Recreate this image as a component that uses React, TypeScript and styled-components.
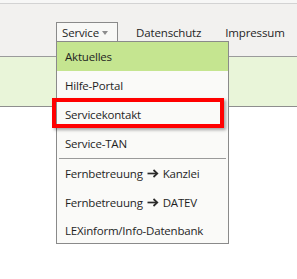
import React from 'react';
import styled, { createGlobalStyle } from 'styled-components';

const GlobalStyle = createGlobalStyle`
  html, body {
    margin: 0;
    padding: 0;
    background: #ffffff;
  }
  body {
    font-family: "Open Sans", "Noto Sans", "Liberation Sans", sans-serif;
    color: #1f1f1f;
  }
`;

const Page = styled.div`
  position: relative;
  width: 297px;
  height: 279px;
  overflow: hidden;
  background: #ffffff;
`;

const TopEdge = styled.div`
  height: 3px;
  background: #f7f7f6;
`;

const Header = styled.header`
  height: 52px;
  background: #f2f1ef;
  border-top: 1px solid #d3d3d3;
  border-bottom: 1px solid #9b9b9b;
`;

const Nav = styled.nav`
  display: flex;
  align-items: flex-start;
  gap: 12px;
  padding: 18px 0 0 56px;
`;

const NavItem = styled.div<{ $open?: boolean }>`
  position: relative;
  display: flex;
  align-items: center;
  gap: 3px;
  height: 18px;
  padding: ${({ $open }) => ($open ? '0 9px 0 5px' : '0 5px')};
  font-size: 11.5px;
  letter-spacing: -0.15px;
  white-space: nowrap;
  color: #1f1f1f;
  background: ${({ $open }) => ($open ? '#f8f8f6' : 'transparent')};
  border: 1px solid ${({ $open }) => ($open ? '#8a8a8a' : 'transparent')};
  border-bottom: none;
`;

const Caret = styled.span`
  width: 0;
  height: 0;
  margin-top: 2px;
  border-left: 3.5px solid transparent;
  border-right: 3.5px solid transparent;
  border-top: 4px solid #8d8d8d;
`;

const Menu = styled.ul`
  position: absolute;
  top: 18px;
  left: -1px;
  z-index: 2;
  width: 171px;
  margin: 0;
  padding: 0;
  list-style: none;
  letter-spacing: -0.2px;
  background: #fafaf8;
  border: 1px solid #8a8a8a;
`;

const MenuItem = styled.li<{ $active?: boolean; $short?: boolean }>`
  display: flex;
  align-items: center;
  gap: 4px;
  height: ${({ $short }) => ($short ? '26px' : '29px')};
  padding: 0 0 0 8px;
  font-size: 11.5px;
  white-space: nowrap;
  color: #1f1f1f;
  background: ${({ $active }) => ($active ? '#c5e590' : 'transparent')};
`;

const Separator = styled.li`
  height: 1px;
  margin: 0 2px;
  background: #9a9a9a;
`;

const GreenBand = styled.div`
  height: 49px;
  background: #e9f5d9;
  border-bottom: 1px solid #8e8e8e;
`;

const Highlight = styled.div`
  position: absolute;
  left: 52px;
  top: 98px;
  width: 164px;
  height: 22px;
  border: 4.5px solid #ff0000;
  box-shadow: 2px 2px 3px rgba(0, 0, 0, 0.35);
  z-index: 3;
  pointer-events: none;
`;

const Arrow = () => (
  <svg width="12" height="9" viewBox="0 0 12 9" aria-hidden="true">
    <path d="M0.5 4.5H10" stroke="#2a2a2a" strokeWidth="1.7" fill="none" />
    <path d="M6.5 1L10.3 4.5L6.5 8" stroke="#2a2a2a" strokeWidth="1.7" fill="none" />
  </svg>
);

type Item = { label: string; to?: string } | '-';

const items: Item[] = [
  { label: 'Aktuelles' },
  { label: 'Hilfe-Portal' },
  { label: 'Servicekontakt' },
  { label: 'Service-TAN' },
  '-',
  { label: 'Fernbetreuung', to: 'Kanzlei' },
  { label: 'Fernbetreuung', to: 'DATEV' },
  { label: 'LEXinform/Info-Datenbank' },
];

export default function App() {
  return (
    <Page>
      <GlobalStyle />
      <TopEdge />
      <Header>
        <Nav>
          <NavItem $open>
            Service
            <Caret />
            <Menu>
              {items.map((item, i) =>
                item === '-' ? (
                  <Separator key={i} />
                ) : (
                  <MenuItem key={i} $active={i === 0} $short={i === items.length - 1}>
                    {item.label}
                    {item.to && (
                      <>
                        <Arrow />
                        {item.to}
                      </>
                    )}
                  </MenuItem>
                )
              )}
            </Menu>
          </NavItem>
          <NavItem>Datenschutz</NavItem>
          <NavItem>Impressum</NavItem>
        </Nav>
      </Header>
      <GreenBand />
      <Highlight />
    </Page>
  );
}
